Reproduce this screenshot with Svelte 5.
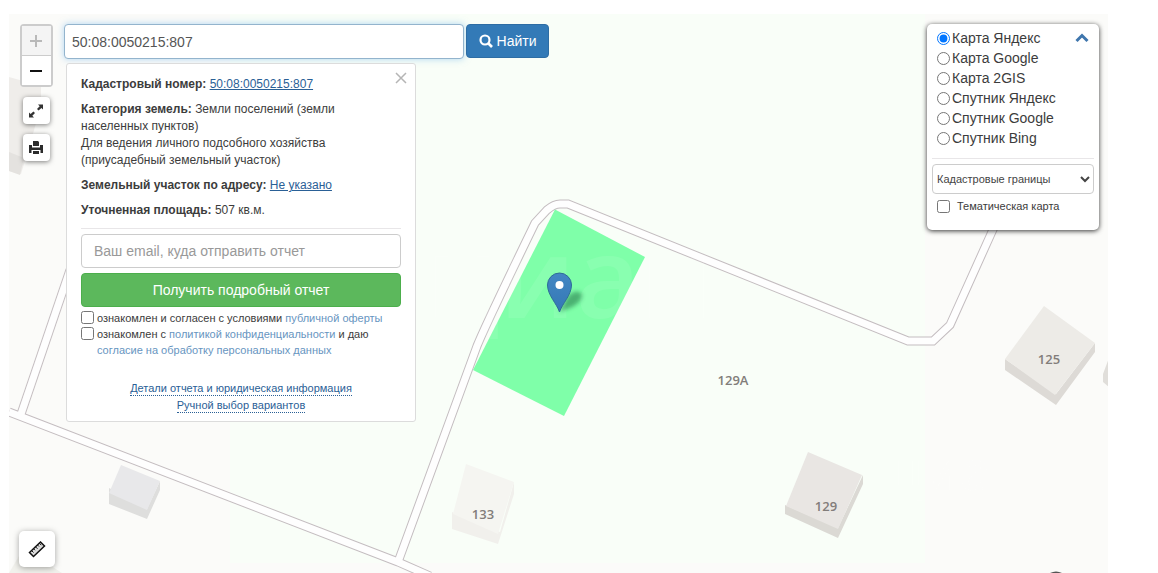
<script lang="ts">
	import { onMount } from 'svelte';

	let query = '50:08:0050215:807';
	let email = '';
	let offerAccepted = false;
	let policyAccepted = false;
	let thematic = false;
	let showDetails = true;
	let showLayers = true;
	let layer = 'Карта Яндекс';
	let searchInput: HTMLInputElement;

	const layers = [
		'Карта Яндекс',
		'Карта Google',
		'Карта 2GIS',
		'Спутник Яндекс',
		'Спутник Google',
		'Спутник Bing'
	];

	onMount(() => {
		// Put the caret after the number
		searchInput.focus();
		searchInput.setSelectionRange(query.length, query.length);
	});
</script>

<main class="map">
	<svg
		class="canvas"
		viewBox="9 14 1099 559"
		preserveAspectRatio="xMinYMin slice"
		role="img"
		aria-label="Карта"
	>
		<rect class="forest" x="230" y="14" width="695" height="549" />

		<!-- Buildings -->
		<path fill="#efedea" d="M9 77 41 86 41 106 32 137 21 174 9 171Z" />
		<path fill="#e4e2df" d="M9 152 24 158 20 175 9 171Z" />
		<path fill="#f1f1ec" d="M9 573 19 556 45 562 62 573Z" />
		<path fill="#dededd" d="M109 488 147 509 160 481 160 490 147 519 109 504Z" />
		<path fill="#e8e8ea" d="M121 465 160 481 147 510 109 493Z" />
		<path fill="#f1f0ec" d="M452 512 500 532 514 482 514 494 498 544 452 529Z" />
		<path fill="#f5f5f1" d="M466 464 514 482 498 534 453 514Z" />
		<path fill="#dbd9d4" d="M785 505 838 528 863 475 863 484 838 538 785 514Z" />
		<path fill="#e9e6e3" d="M808 452 862 475 838 529 786 506Z" />
		<path fill="#dddad6" d="M1005 359 1056 394 1095 343 1095 352 1056 405 1005 370Z" />
		<path fill="#edebe7" d="M1044 306 1095 343 1055 395 1005 359Z" />
		<path fill="#e0deda" d="M1109 358 1103 374 1103 382 1109 387Z" />

		<!-- Roads: outline first, then the white surface -->
		<g class="road-edge">
			<path d="M9 412 398 562 430 576" />
			<path d="M20 417 70 270" />
			<path d="M398 562 477 346Q485 326 535 223L547 210Q554 204 560 204H568L908 341H933L950 325 995 225" />
		</g>
		<g class="road">
			<path d="M9 412 398 562 430 576" />
			<path d="M20 417 70 270" />
			<path d="M398 562 477 346Q485 326 535 223L547 210Q554 204 560 204H568L908 341H933L950 325 995 225" />
		</g>

		<path fill="#7fffa9" d="M555 209.500 645 257 564 416 473 370Z" />

		<g class="watermark" aria-hidden="true">
			<text x="426" y="318" font-size="112">циан</text>
			<text x="888" y="490" font-size="54">циан</text>
		</g>

		<g class="house-number">
			<text x="733" y="385">129А</text>
			<text x="483" y="519">133</text>
			<text x="826" y="511">129</text>
			<text x="1049" y="364">125</text>
		</g>

		<!-- Marker with its shadow -->
		<defs>
			<filter id="soft" x="-50%" y="-50%" width="200%" height="200%">
				<feGaussianBlur stdDeviation="2" />
			</filter>
			<linearGradient id="pin" x1="0" y1="0" x2="0" y2="1">
				<stop offset="0" stop-color="#4387c3" />
				<stop offset="1" stop-color="#3478b5" />
			</linearGradient>
		</defs>
		<path d="M559 312 568 296Q577 288 582 294 583 301 572 307Z" fill="#16643b" opacity=".5" filter="url(#soft)" />
		<path
			d="M559.500 312C557 304 547.500 295 547.500 285a12 12 0 0 1 24 0C571.500 295 562 304 559.500 312Z"
			fill="url(#pin)"
			stroke="#2e6c97"
		/>
		<circle cx="559.500" cy="285" r="4" fill="#fff" />
		<path d="M1050 573q6-3 12 0Z" fill="#555" />
	</svg>

	<div class="overlay">
		<div class="tools">
			<div class="tool-group">
				<div class="zoom">
					<button disabled aria-label="Приблизить">
						<svg width="12" height="12"><path d="M6 0V12M0 6H12" stroke="#b9b9b9" stroke-width="2" /></svg>
					</button>
					<button aria-label="Отдалить">
						<svg width="12" height="12"><path d="M0 6H12" stroke="#111" stroke-width="2" /></svg>
					</button>
				</div>
				<button class="tool" aria-label="Во весь экран">
					<svg width="16" height="16" viewBox="0 0 16 16">
						<path d="M10 1.500H15V6.500L13.400 4.900 10.600 7.600 9 6 11.700 3.200ZM1 9.500 2.600 11.100 5.400 8.400 7 10 4.300 12.800 6 14.500H1Z" fill="#333" />
					</svg>
				</button>
				<button class="tool" aria-label="Печать">
					<svg width="14" height="14" viewBox="0 0 14 14">
						<path d="M4 0H9L10 1V5H4ZM0 4H3V6.500H11V4H14V12H11.500V9H2.500V12H0ZM4 10H10V13H4ZM1 6.500H13V9H1Z" fill="#2b2b2b" />
					</svg>
				</button>
			</div>
			<button class="tool ruler" aria-label="Линейка">
				<svg width="18" height="18" viewBox="0 0 18 18">
					<path d="M1.500 12.500 12.500 2 16.500 6 5.500 16.500Z" fill="#ddd" stroke="#111" stroke-width="1.500" />
					<path d="M3.500 10.500 5.500 12.500M5.500 8.700 7 10.200M7.500 6.800 9.500 8.800M9.500 5 11 6.500M11.300 3.200 13.300 5.200" stroke="#111" />
				</svg>
			</button>
		</div>

		<div class="search-column">
			<form class="search" on:submit|preventDefault>
				<input
					type="text"
					aria-label="Кадастровый номер"
					spellcheck="false"
					bind:this={searchInput}
					bind:value={query}
				/>
				<button class="find">
					<svg width="14" height="14" viewBox="0 0 14 14">
						<circle cx="6" cy="6" r="4.500" fill="none" stroke="#fff" stroke-width="2.200" />
						<path d="M9 9 13 13" stroke="#fff" stroke-width="2.600" />
					</svg>
					Найти
				</button>
			</form>

			{#if showDetails}
				<section class="details">
					<button class="close" aria-label="Закрыть" on:click={() => (showDetails = false)}>
						<svg width="12" height="12"><path d="M1 1 11 11M11 1 1 11" stroke="#b5b5b5" stroke-width="1.500" /></svg>
					</button>
					<p><b>Кадастровый номер:</b> <a href="#object">50:08:0050215:807</a></p>
					<p>
						<b>Категория земель:</b> <span>Земли поселений (земли</span><br />
						<span>населенных пунктов)</span><br />
						Для ведения личного подсобного хозяйства (приусадебный земельный участок)
					</p>
					<p><b>Земельный участок по адресу:</b> <a href="#address">Не указано</a></p>
					<p><b>Уточненная площадь:</b> 507 кв.м.</p>
					<hr />
					<form on:submit|preventDefault>
						<input
							class="email"
							type="email"
							aria-label="Ваш email"
							placeholder="Ваш email, куда отправить отчет"
							bind:value={email}
						/>
						<button class="report">Получить подробный отчет</button>
						<div class="consent">
							<input id="offer" type="checkbox" bind:checked={offerAccepted} />
							<label for="offer">ознакомлен и согласен с условиями <a href="#offer-text">публичной оферты</a></label>
						</div>
						<div class="consent">
							<input id="policy" type="checkbox" bind:checked={policyAccepted} />
							<label for="policy">
								ознакомлен с <a href="#policy-text">политикой конфиденциальности</a> и даю
								<a href="#personal">согласие на обработку персональных данных</a>
							</label>
						</div>
					</form>
					<nav class="more">
						<a href="#legal">Детали отчета и юридическая информация</a>
						<a href="#variants">Ручной выбор вариантов</a>
					</nav>
				</section>
			{/if}
		</div>

		<aside class="layers">
			<div class="layers-head">
				<div class="layer-list">
					{#each layers as name}
						<label><input type="radio" name="layer" value={name} bind:group={layer} />{name}</label>
					{/each}
				</div>
				<button class="toggle" aria-label="Свернуть" on:click={() => (showLayers = !showLayers)}>
					<svg width="14" height="10"><path d="M1.500 8 7 2.500 12.500 8" fill="none" stroke="#3f76ad" stroke-width="3" /></svg>
				</button>
			</div>
			{#if showLayers}
				<hr />
				<select aria-label="Слой">
					<option>Кадастровые границы</option>
				</select>
				<label class="thematic"><input type="checkbox" bind:checked={thematic} />Тематическая карта</label>
			{/if}
		</aside>
	</div>
</main>

<style>
	:global(body) {
		margin: 0;
		background: #fff;
		color: #3c3c3c;
		font: 12px/17px 'Liberation Sans', Arial, sans-serif;
	}

	.map {
		position: relative;
		display: flex;
		box-sizing: border-box;
		min-height: calc(100vh - 14px);
		margin: 14px 50px 0 9px;
		background: #fbfbf9;
	}

	.canvas {
		position: absolute;
		inset: 0;
		width: 100%;
		height: 100%;
	}

	.forest {
		fill: #f9fef8;
	}

	.road-edge path,
	.road path {
		fill: none;
		stroke: #c4bdc0;
		stroke-width: 9;
	}

	.road path {
		stroke: #fefefe;
		stroke-width: 7;
	}

	.watermark {
		fill: #fff;
		font-family: 'Open Sans', sans-serif;
		font-weight: 600;
		opacity: 0.08;
	}

	.house-number {
		fill: #827d7a;
		font: 600 13px 'Open Sans', sans-serif;
		text-anchor: middle;
	}

	.overlay {
		position: relative;
		display: flex;
		flex: 1;
		gap: 11px;
		padding: 10px 9px 6px 10px;
	}

	input,
	button,
	select {
		box-sizing: border-box;
		margin: 0;
		font-family: inherit;
	}

	button {
		display: flex;
		align-items: center;
		justify-content: center;
		padding: 0;
		border: 0;
		cursor: pointer;
	}

	hr {
		margin: 0;
		border: 0;
		border-top: 1px solid #e8e6e8;
	}

	a {
		color: #2a6096;
	}

	.tools {
		display: flex;
		flex-direction: column;
		justify-content: space-between;
		width: 34px;
	}

	.tool-group {
		display: flex;
		flex-direction: column;
		align-items: center;
		gap: 10px;
	}

	.zoom {
		border: 2px solid #ccc;
		border-radius: 4px;
	}

	.zoom button {
		width: 29px;
		height: 29px;
		background: #fff;
	}

	.zoom button:disabled {
		height: 30px;
		border-bottom: 1px solid #ccc;
		background: #f4f4f4;
	}

	.tool {
		width: 27px;
		height: 27px;
		border-radius: 4px;
		background: #fff;
		box-shadow: 0 1px 5px rgba(0, 0, 0, 0.5);
	}

	.ruler {
		width: 36px;
		height: 36px;
		border-radius: 5px;
		box-shadow: 0 1px 6px rgba(0, 0, 0, 0.35);
	}

	.search-column {
		display: flex;
		flex-direction: column;
		gap: 4px;
	}

	.search {
		display: flex;
		gap: 2px;
	}

	.search input {
		width: 400px;
		height: 35px;
		padding: 0 7px;
		border: 1px solid #93b4cd;
		border-radius: 4px;
		outline: 0;
		color: #555;
		font-size: 14px;
		box-shadow: 0 0 7px rgba(102, 175, 233, 0.5);
	}

	.find {
		gap: 4px;
		width: 83px;
		height: 34px;
		border: 1px solid #2e6da4;
		border-radius: 4px;
		background: #337ab7;
		color: #fff;
		font-size: 14px;
	}

	.details {
		position: relative;
		box-sizing: border-box;
		width: 350px;
		margin-left: 2px;
		padding: 12px 14px 8px;
		border: 1px solid #dcdcdc;
		border-radius: 3px;
		background: #fff;
	}

	.details p {
		margin: 0 40px 8px 0;
	}

	.close {
		position: absolute;
		top: 8px;
		right: 8px;
		background: none;
	}

	.details hr {
		margin-top: 9px;
	}

	.details form {
		display: flex;
		flex-direction: column;
		margin-top: 5px;
	}

	.email {
		height: 34px;
		margin-bottom: 5px;
		padding: 0 12px;
		border: 1px solid #ccc;
		border-radius: 4px;
		font-size: 14px;
	}

	.email::placeholder {
		color: #999;
	}

	.report {
		height: 34px;
		margin-bottom: 3px;
		border: 1px solid #4cae4c;
		border-radius: 4px;
		background: #5cb85c;
		color: #fff;
		font-size: 14px;
	}

	.consent {
		display: flex;
		gap: 3px;
		font-size: 11px;
		line-height: 16px;
	}

	.consent input {
		flex: none;
		width: 13px;
		height: 13px;
		margin-top: 1px;
	}

	.consent a {
		color: #6795bf;
		text-decoration: none;
	}

	.more {
		display: flex;
		flex-direction: column;
		align-items: center;
		gap: 3px;
		margin-top: 24px;
		font-size: 11px;
		line-height: 13px;
	}

	.more a {
		border-bottom: 1px dotted #2a6096;
		text-decoration: none;
	}

	.layers {
		display: flex;
		flex-direction: column;
		align-self: flex-start;
		box-sizing: border-box;
		width: 172px;
		margin-left: auto;
		padding: 4px 5px 15px;
		border-radius: 5px;
		background: #fff;
		box-shadow: 0 1px 5px rgba(0, 0, 0, 0.8);
	}

	.layers-head {
		display: flex;
		align-items: flex-start;
		justify-content: space-between;
		padding: 0 5px 10px;
	}

	.layers label {
		display: flex;
		align-items: center;
	}

	.layers label input {
		width: 13px;
		height: 13px;
	}

	.layer-list label {
		gap: 2px;
		font-size: 14px;
		line-height: 20px;
	}

	.toggle {
		height: 20px;
		background: none;
	}

	.layers select {
		height: 30px;
		margin: 5px 0 4px;
		border: 1px solid #ccc;
		border-radius: 4px;
		background: #fff;
		color: #444;
		font-size: 11px;
	}

	.layers .thematic {
		gap: 7px;
		padding-left: 5px;
		font-size: 11px;
	}
</style>
